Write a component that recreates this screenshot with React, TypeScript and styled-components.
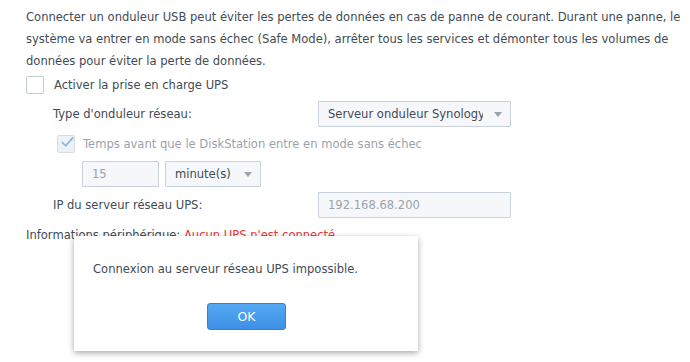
import React from 'react';
import styled, { createGlobalStyle } from 'styled-components';

const GlobalStyle = createGlobalStyle`
  html, body {
    margin: 0;
    padding: 0;
    background: #ffffff;
  }
  body {
    font-family: "DejaVu Sans", Verdana, sans-serif;
    font-size: 11.55px;
    color: #414b55;
  }
`;

const Page = styled.div`
  position: relative;
  width: 690px;
  height: 362px;
  overflow: hidden;
  padding: 6px 0 0 26px;
  box-sizing: border-box;
`;

const Intro = styled.p`
  margin: 0;
  line-height: 22px;
  white-space: nowrap;
`;

const Row = styled.div<{ $indent?: number; $top?: number }>`
  display: flex;
  align-items: center;
  margin-left: ${p => p.$indent ?? 0}px;
  margin-top: ${p => p.$top ?? 0}px;
  gap: 6px;
`;

const Box = styled.span<{ $checked?: boolean }>`
  width: 18px;
  height: 18px;
  box-sizing: border-box;
  border: 1px solid ${p => (p.$checked ? '#d6dde5' : '#c3cbd4')};
  background: ${p => (p.$checked ? '#edf1f6' : '#ffffff')};
  border-radius: 2px;
  display: flex;
  align-items: center;
  justify-content: center;
  margin-right: ${p => (p.$checked ? 2 : 4)}px;
  flex-shrink: 0;
`;

const Label = styled.span<{ $muted?: boolean; $width?: number }>`
  color: ${p => (p.$muted ? '#9aa3ad' : '#414b55')};
  width: ${p => (p.$width ? `${p.$width}px` : 'auto')};
  white-space: nowrap;
`;

const Field = styled.div<{ $width: number; $muted?: boolean }>`
  width: ${p => p.$width}px;
  height: 26px;
  box-sizing: border-box;
  border: 1px solid #c9d2dc;
  background: #f5f7fa;
  border-radius: 1px;
  display: flex;
  align-items: center;
  padding: 0 8px 0 9px;
  color: ${p => (p.$muted ? '#9aa3ad' : '#414b55')};
  overflow: hidden;
`;

const FieldText = styled.span`
  flex: 1;
  white-space: nowrap;
  overflow: hidden;
`;

const Caret = styled.span`
  width: 0;
  height: 0;
  border-left: 4.5px solid transparent;
  border-right: 4.5px solid transparent;
  border-top: 5px solid #9aa3ad;
  margin-left: 11px;
  flex-shrink: 0;
`;

const Info = styled.div`
  margin-top: 10px;
  white-space: nowrap;
`;

const Red = styled.span`
  color: #e5383b;
`;

const Dialog = styled.div`
  position: absolute;
  left: 74px;
  top: 236px;
  width: 344px;
  height: 115px;
  background: #ffffff;
  box-shadow: 0 2px 6px rgba(0, 0, 0, 0.35);
  box-sizing: border-box;
  padding: 25px 0 0 19px;
  display: flex;
  flex-direction: column;
`;

const DialogText = styled.div`
  color: #414b55;
  line-height: 16px;
`;

const OkButton = styled.button`
  margin: 26px 0 0 114px;
  width: 79px;
  height: 27px;
  border: 1px solid #2f82d8;
  border-radius: 3px;
  background: linear-gradient(#55a8f2, #3d8fe6);
  color: #ffffff;
  font-family: "DejaVu Sans", Verdana, sans-serif;
  font-size: 12.5px;
  padding: 0;
`;

const Check = () => (
  <svg width="19" height="16" viewBox="0 0 19 16" style={{ marginTop: -4, marginLeft: 3 }}>
    <path d="M2 9 L7 13.5 L17 2" fill="none" stroke="#7fb6ea" strokeWidth="2.4" strokeLinecap="round" strokeLinejoin="round" />
  </svg>
);

export default function App() {
  return (
    <>
      <GlobalStyle />
      <Page>
        <Intro>
          Connecter un onduleur USB peut éviter les pertes de données en cas de panne de courant. Durant une panne, le
          <br />
          système va entrer en mode sans échec (Safe Mode), arrêter tous les services et démonter tous les volumes de
          <br />
          données pour éviter la perte de données.
        </Intro>
        <Row $top={4}>
          <Box />
          <Label>Activer la prise en charge UPS</Label>
        </Row>
        <Row $indent={27} $top={7}>
          <Label $width={259}>Type d'onduleur réseau:</Label>
          <Field $width={193}>
            <FieldText>Serveur onduleur Synology</FieldText>
            <Caret />
          </Field>
        </Row>
        <Row $indent={31} $top={8}>
          <Box $checked>
            <Check />
          </Box>
          <Label $muted>Temps avant que le DiskStation entre en mode sans échec</Label>
        </Row>
        <Row $indent={56} $top={8}>
          <Field $width={77} $muted>
            <FieldText>15</FieldText>
          </Field>
          <Field $width={96}>
            <FieldText>minute(s)</FieldText>
            <Caret />
          </Field>
        </Row>
        <Row $indent={27} $top={5}>
          <Label $width={259}>IP du serveur réseau UPS:</Label>
          <Field $width={193} $muted>
            <FieldText>192.168.68.200</FieldText>
          </Field>
        </Row>
        <Info>
          Informations périphérique: <Red>Aucun UPS n'est connecté.</Red>
        </Info>
        <Dialog>
          <DialogText>Connexion au serveur réseau UPS impossible.</DialogText>
          <OkButton>OK</OkButton>
        </Dialog>
      </Page>
    </>
  );
}
